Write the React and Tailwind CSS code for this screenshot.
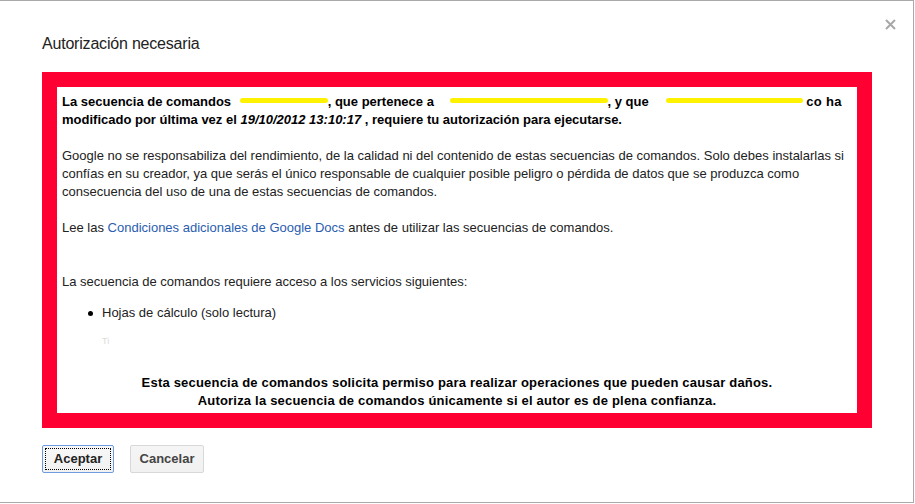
import React from "react";

const Scribble = ({ className }) => (
  <span className={`inline-block h-[5px] rounded-full bg-[#fff200] align-[3px] ${className}`} />
);

const App = () => {
  return (
    <div className="h-[504px] w-[915px] bg-white font-['Liberation_Sans',Arial,sans-serif] text-[13px] leading-[18px] text-[#222]">
      <div className="relative h-[503px] w-[914px] border-t border-r border-b border-[#a9a9a9] px-[42px] pt-[33px]">
        <button className="absolute right-[17px] top-[18px] text-[#aaa]" aria-label="Cerrar">
          <svg width="11" height="11" viewBox="0 0 11 11">
            <path d="M1 1 L10 10 M10 1 L1 10" stroke="#a8a8a8" strokeWidth="2" />
          </svg>
        </button>

        <h1 className="text-[16px] leading-[20px] tracking-[-0.2px] text-[#222]">Autorización necesaria</h1>

        <div className="mt-[18px] h-[356px] w-[830px] border-[15px] border-[#ff0033] bg-white">
          <div className="flex h-full flex-col px-[5px] pt-[6px]">
            <p className="font-bold text-black">
              La secuencia de comandos <Scribble className="ml-[5px] w-[88px]" />, que pertenece a{" "}
              <Scribble className="ml-[12px] w-[158px]" />, y que <Scribble className="ml-[14px] w-[137px]" />
              <span className="ml-[3px] tracking-[0.3px]">co ha</span> modificado por última vez el{" "}
              <i>19/10/2012 13:10:17</i> , requiere tu autorización para ejecutarse.
            </p>

            <p className="mt-[18px]">
              Google no se responsabiliza del rendimiento, de la calidad ni del contenido de estas secuencias de
              comandos. Solo debes instalarlas si confías en su creador, ya que serás el único responsable de cualquier
              posible peligro o pérdida de datos que se produzca como consecuencia del uso de una de estas secuencias de
              comandos.
            </p>

            <p className="mt-[18px]">
              Lee las <a className="text-[#2a5db0]">Condiciones adicionales de Google Docs</a> antes de utilizar las
              secuencias de comandos.
            </p>

            <p className="mt-[36px]">La secuencia de comandos requiere acceso a los servicios siguientes:</p>

            <ul className="mt-[13px] pl-[26px]">
              <li className="flex items-center">
                <span className="mr-[9px] inline-block h-[5px] w-[5px] rounded-full bg-black" />
                Hojas de cálculo (solo lectura)
              </li>
              <li className="mt-[14px] pl-[14px] text-[9px] leading-[10px] text-[#dcdcdc]">Ti</li>
            </ul>

            <div className="mt-auto pb-[3px] text-center font-bold tracking-[0.2px] text-black">
              <p>Esta secuencia de comandos solicita permiso para realizar operaciones que pueden causar daños.</p>
              <p>Autoriza la secuencia de comandos únicamente si el autor es de plena confianza.</p>
            </div>
          </div>
        </div>

        <div className="mt-[17px] flex gap-[16px]">
          <button className="h-[28px] w-[72px] rounded-[2px] border border-[#6f9be0] bg-gradient-to-b from-[#f8f8f8] to-[#f1f1f1] p-[2px] text-[13px] font-bold text-[#222]">
            <span className="flex h-full w-full items-center justify-center border border-dotted border-black">
              Aceptar
            </span>
          </button>
          <button className="h-[28px] w-[74px] rounded-[2px] border border-[#d8d8d8] bg-gradient-to-b from-[#f5f5f5] to-[#f1f1f1] text-[13px] font-bold text-[#444]">
            Cancelar
          </button>
        </div>
      </div>
    </div>
  );
};

export default App;
